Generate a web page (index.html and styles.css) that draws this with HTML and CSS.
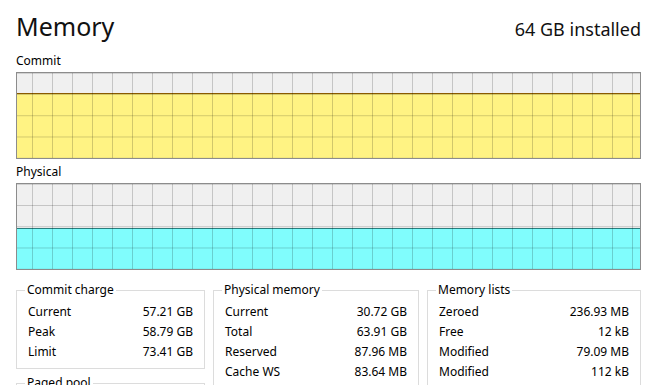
FILE: index.html
```html
<!DOCTYPE html>
<html lang="en">
<head>
    <meta charset="UTF-8">
    <meta name="viewport" content="width=device-width, initial-scale=1.0">
    <title>Memory</title>
    <link rel="stylesheet" href="styles.css">
</head>
<body>
    <div class="header">
        <h1>Memory</h1>
        <div class="installed">64 GB installed</div>
    </div>

    <div class="graph-label">Commit</div>
    <div class="graph">
        <div class="fill commit" style="height: 77%"></div>
    </div>

    <div class="graph-label">Physical</div>
    <div class="graph">
        <div class="fill physical" style="height: 48%"></div>
    </div>

    <div class="groups">
        <div class="column">
            <fieldset class="group">
                <legend>Commit charge</legend>
                <div class="row"><span>Current</span><span>57.21 GB</span></div>
                <div class="row"><span>Peak</span><span>58.79 GB</span></div>
                <div class="row"><span>Limit</span><span>73.41 GB</span></div>
            </fieldset>
            <fieldset class="group">
                <legend>Paged pool</legend>
            </fieldset>
        </div>
        <div class="column">
            <fieldset class="group">
                <legend>Physical memory</legend>
                <div class="row"><span>Current</span><span>30.72 GB</span></div>
                <div class="row"><span>Total</span><span>63.91 GB</span></div>
                <div class="row"><span>Reserved</span><span>87.96 MB</span></div>
                <div class="row"><span>Cache WS</span><span>83.64 MB</span></div>
            </fieldset>
        </div>
        <div class="column">
            <fieldset class="group">
                <legend>Memory lists</legend>
                <div class="row"><span>Zeroed</span><span>236.93 MB</span></div>
                <div class="row"><span>Free</span><span>12 kB</span></div>
                <div class="row"><span>Modified</span><span>79.09 MB</span></div>
                <div class="row"><span>Modified</span><span>112 kB</span></div>
            </fieldset>
        </div>
    </div>
</body>
</html>
```

FILE: styles.css
```css
body {
    font-family: "Noto Sans", sans-serif;
    font-size: 12px;
    color: #000;
    background-color: #fff;
    margin: 0;
    padding: 11px 15px 0 16px;
    overflow: hidden;
}
.header {
    display: flex;
    justify-content: space-between;
    align-items: baseline;
    height: 30px;
}
h1 {
    font-size: 25px;
    font-weight: normal;
    line-height: 30px;
    margin: 0;
    color: #111;
}
.installed {
    font-size: 18px;
    color: #111;
}
.graph-label {
    line-height: 16px;
    margin: 12px 0 3px;
}
.graph + .graph-label {
    margin-top: 5px;
}
.graph {
    position: relative;
    height: 85px;
    border: 1px solid #8c8c8c;
    background-color: #f0f0f0;
    display: flex;
    flex-direction: column;
    justify-content: flex-end;
}
.graph::after {
    content: "";
    position: absolute;
    inset: 0;
    background-image:
        linear-gradient(to right, rgba(0, 0, 0, 0.18) 1px, transparent 1px),
        linear-gradient(to bottom, rgba(0, 0, 0, 0.18) 1px, transparent 1px);
    background-size: 20px 100%, 100% 21.25px;
    background-position: 15px 0, 0 21px;
}
.fill {
    box-sizing: border-box;
}
.fill.commit {
    background-color: #fff383;
    border-top: 1px solid #8a5a00;
}
.fill.physical {
    background-color: #80fdfd;
    border-top: 1px solid #2b7d7d;
}
.groups {
    display: grid;
    grid-template-columns: 189px 206px 1fr;
    gap: 8px;
    margin-top: 12px;
}
.column {
    display: flex;
    flex-direction: column;
    gap: 6px;
}
.group {
    margin: 0;
    padding: 4px 11px 6px;
    border: 1px solid #dcdcdc;
    min-width: 0;
}
.group legend {
    line-height: 16px;
    padding: 0 2px;
    margin-left: -3px;
}
.row {
    display: flex;
    justify-content: space-between;
    line-height: 20px;
}
```
